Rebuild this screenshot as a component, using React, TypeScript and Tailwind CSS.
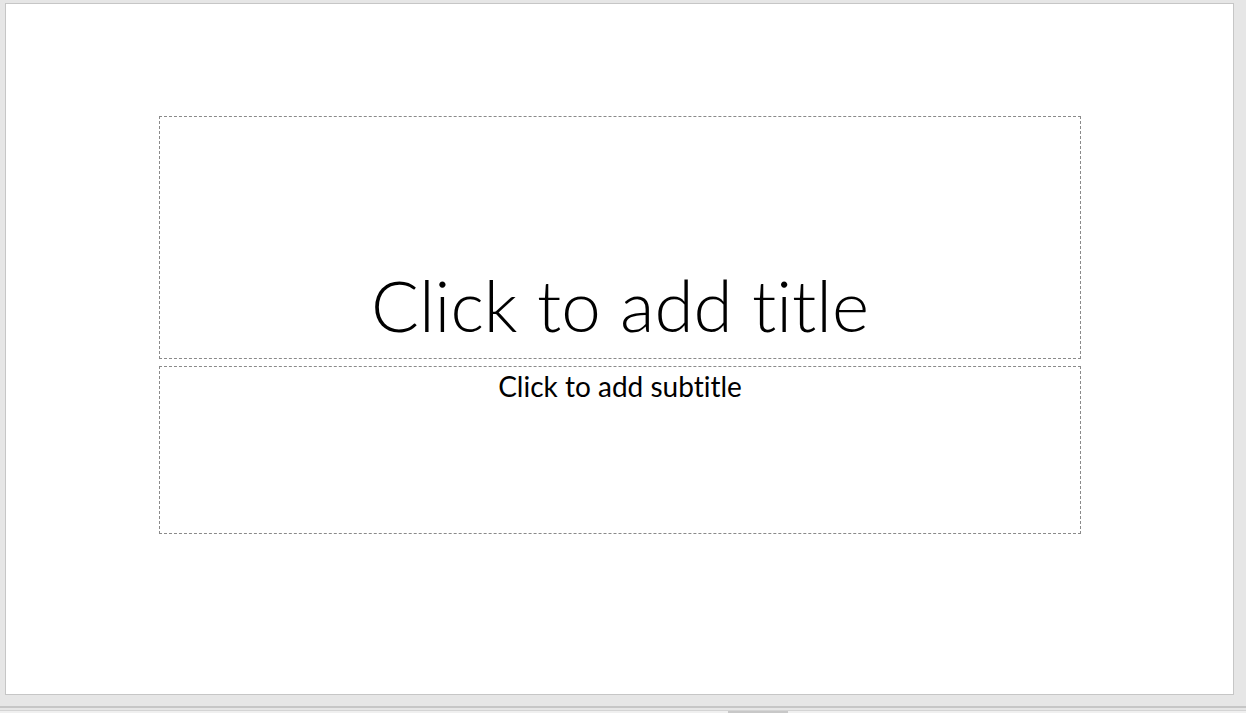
import React from 'react';

function Placeholder({ className, children }: { className: string; children: React.ReactNode }) {
  return (
    <div className={`w-[922px] border border-dashed border-[#8a8a8a] flex justify-center ${className}`}>
      {children}
    </div>
  );
}

export default function App() {
  return (
    <div className="h-[713px] w-full bg-[#e6e6e6] flex flex-col overflow-hidden [font-variant-ligatures:none]" style={{ fontFamily: 'Lato, "Open Sans", sans-serif' }}>
      {/* slide area */}
      <div className="pt-[3px] pl-[5px] pr-[12px]">
        <div className="h-[692px] w-[1229px] border border-[#c6c6c6] bg-white pt-[112px] pl-[153px] flex flex-col gap-[7px]">
          <Placeholder className="h-[243px] items-end">
            <div className="text-[71px] leading-none font-light text-black pb-[18px]">Click to add title</div>
          </Placeholder>
          <Placeholder className="h-[168px] items-start">
            <div className="text-[28px] leading-none text-black pt-[5px]">Click to add subtitle</div>
          </Placeholder>
        </div>
      </div>

      {/* bottom scroll strip */}
      <div className="mt-[11px] flex flex-col">
        <div className="h-[2px] bg-[#c6c6c6]" />
        <div className="h-[2px] bg-[#e6e6e6]" />
        <div className="h-[1px] bg-[#d4d4d4]" />
        <div className="h-[4px] bg-[#f0f0f0] relative">
          <div className="absolute left-[728px] top-0 h-full w-[60px] bg-[#c8c8c8]" />
        </div>
      </div>
    </div>
  );
}
